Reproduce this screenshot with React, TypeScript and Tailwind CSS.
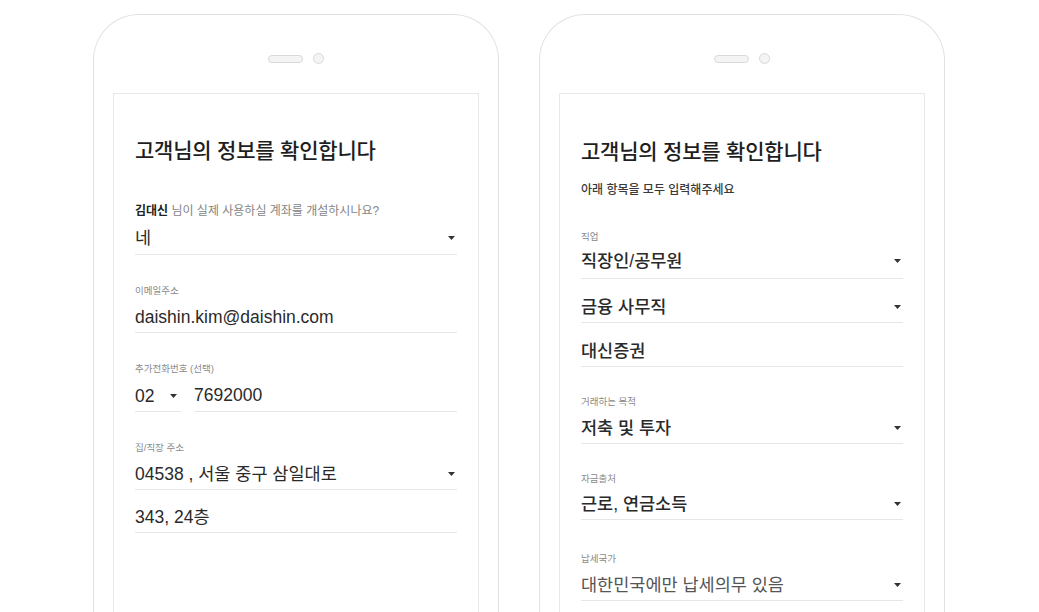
import React from "react";

const FONT = { fontFamily: '"Liberation Sans", "Noto Sans CJK KR", sans-serif' };

function Caret() {
  return (
    <svg width="7" height="4" viewBox="0 0 7 4" className="shrink-0">
      <path d="M0 0 L7 0 L3.5 4 Z" fill="#333" />
    </svg>
  );
}

function Label({ children, mt = "mt-[29px]" }: { children: React.ReactNode; mt?: string }) {
  return <div className={`${mt} text-[9.5px] leading-[14px] text-[#8a8a8a]`}>{children}</div>;
}

function Value({
  children,
  caret = false,
  mt = "mt-[7px]",
  pb = "pb-[3px]",
  weight = "font-normal",
  color = "text-[#2a2a2a]",
}: {
  children: React.ReactNode;
  caret?: boolean;
  mt?: string;
  pb?: string;
  weight?: string;
  color?: string;
}) {
  return (
    <div className={`${mt} ${pb} flex items-center justify-between border-b border-[#e6e6e6]`}>
      <span className={`text-[17.5px] leading-[24px] ${weight} ${color}`}>{children}</span>
      {caret && (
        <span className="pr-[2px]">
          <Caret />
        </span>
      )}
    </div>
  );
}

function Phone({ children }: { children: React.ReactNode }) {
  return (
    <div className="w-[406px] h-[640px] shrink-0 rounded-t-[46px] border border-b-0 border-[#e2e2e2] flex flex-col items-center bg-white">
      <div className="mt-[38px] flex items-center gap-[10px]">
        <div className="w-[35px] h-[8px] rounded-full border border-[#d9d9d9] bg-[#f4f4f4]" />
        <div className="w-[11px] h-[11px] rounded-full border border-[#d9d9d9] bg-[#f4f4f4]" />
      </div>
      <div className="mt-[29px] w-[366px] flex-1 border border-b-0 border-[#e8e8e8] px-[21px]">{children}</div>
    </div>
  );
}

export default function App() {
  return (
    <div className="w-[1039px] h-[612px] overflow-hidden bg-white" style={FONT}>
      <div className="flex justify-center gap-[40px] pt-[14px] pr-[1px]">
        <Phone>
          <div className="pt-[45px] text-[21px] leading-[24px] font-medium text-[#1e1e1e] tracking-[-0.2px]">
            고객님의 정보를 확인합니다
          </div>
          <div className="mt-[40px] text-[12px] leading-[16px] text-[#858585]">
            <span className="font-bold text-[#222]">김대신</span> 님이 실제 사용하실 계좌를 개설하시나요?
          </div>
          <Value caret mt="mt-[7px]" pb="pb-[4px]">네</Value>

          <Label>이메일주소</Label>
          <Value>daishin.kim@daishin.com</Value>

          <Label>추가전화번호 (선택)</Label>
          <div className="mt-[7px] flex gap-[13px]">
            <div className="w-[46px] flex items-center justify-between border-b border-[#e6e6e6] pb-[3px]">
              <span className="text-[17.5px] leading-[24px] text-[#2a2a2a]">02</span>
              <span className="pr-[4px]">
                <Caret />
              </span>
            </div>
            <div className="flex-1 border-b border-[#e6e6e6] pb-[3px]">
              <span className="text-[17.5px] leading-[24px] text-[#2a2a2a]">7692000</span>
            </div>
          </div>

          <Label>집/직장 주소</Label>
          <Value caret>04538 , 서울 중구 삼일대로</Value>
          <Value mt="mt-[15px]">343, 24층</Value>
        </Phone>

        <Phone>
          <div className="pt-[46px] text-[21px] leading-[24px] font-medium text-[#1e1e1e] tracking-[-0.2px]">
            고객님의 정보를 확인합니다
          </div>
          <div className="mt-[18px] text-[12px] leading-[16px] font-medium text-[#3a3a3a]">
            아래 항목을 모두 입력해주세요
          </div>

          <Label mt="mt-[32px]">직업</Label>
          <Value caret weight="font-medium" mt="mt-[5px]" pb="pb-[5px]">직장인/공무원</Value>
          <Value caret weight="font-medium" mt="mt-[16px]">금융 사무직</Value>
          <Value weight="font-medium" mt="mt-[16px]">대신증권</Value>

          <Label mt="mt-[28px]">거래하는 목적</Label>
          <Value caret weight="font-medium">저축 및 투자</Value>

          <Label mt="mt-[28px]">자금출처</Label>
          <Value caret weight="font-medium" mt="mt-[6px]">근로, 연금소득</Value>

          <Label mt="mt-[32px]">납세국가</Label>
          <Value caret color="text-[#555]">대한민국에만 납세의무 있음</Value>
        </Phone>
      </div>
    </div>
  );
}
